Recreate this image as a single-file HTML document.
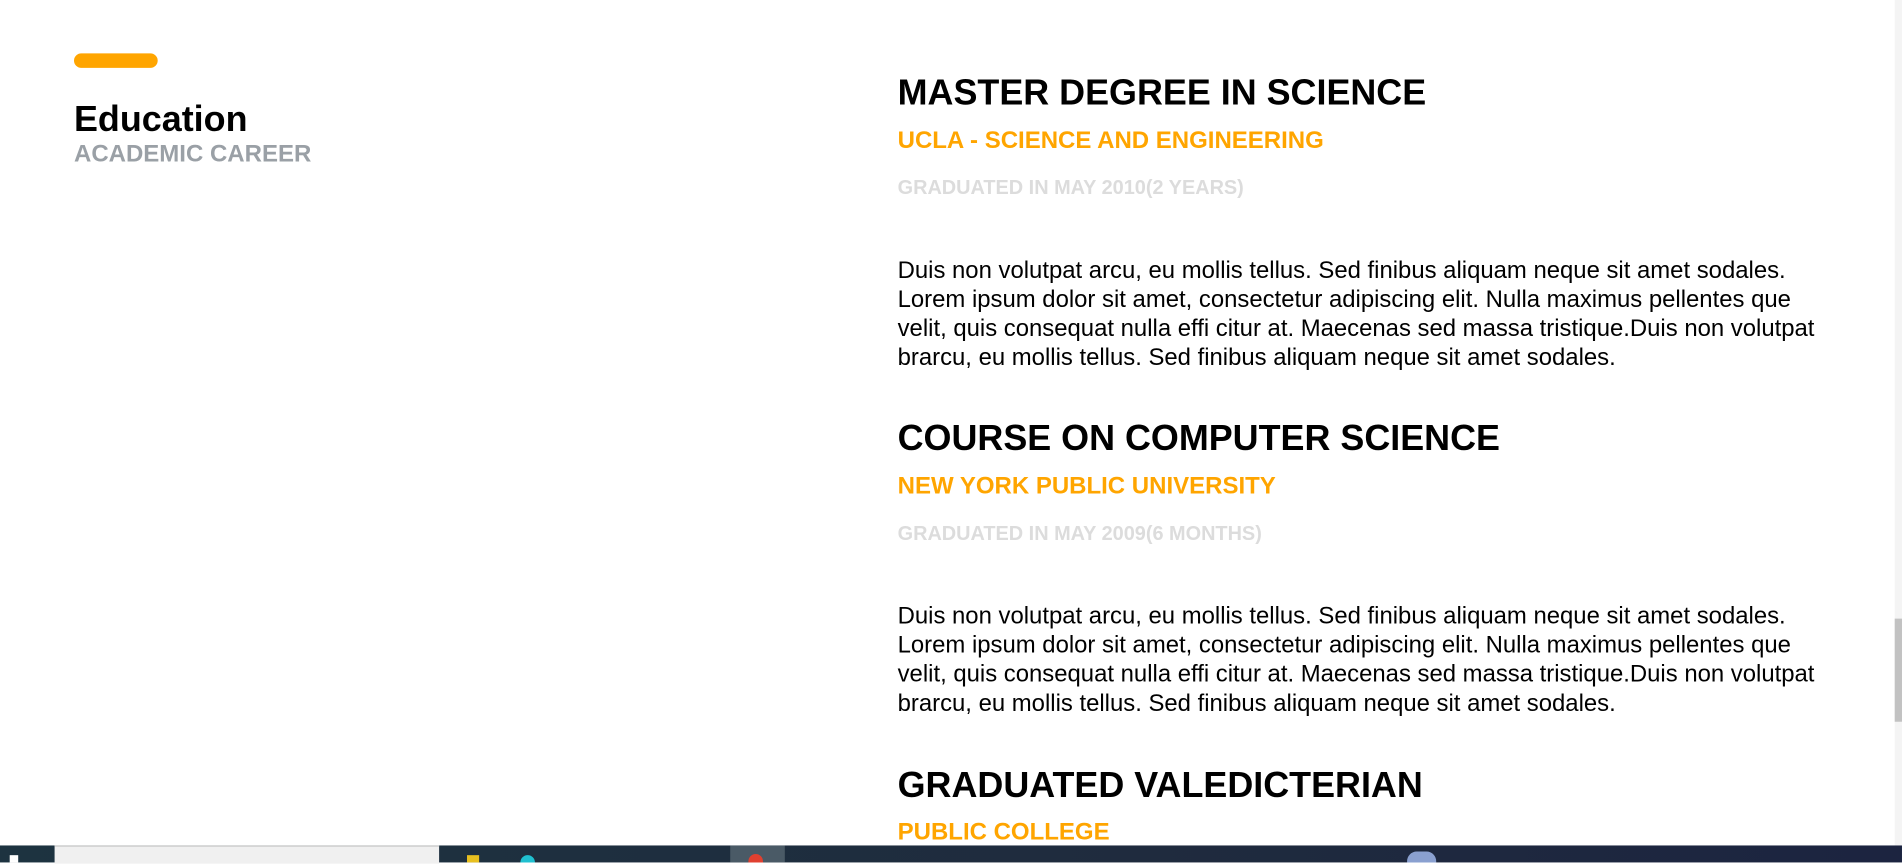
<!DOCTYPE html>
<html><head><meta charset="utf-8"><style>
html,body{margin:0;padding:0;width:1902px;height:862px;overflow:hidden;background:#fff;}
#w{position:absolute;left:0;top:0;width:1568px;height:711px;transform:scale(1.2130);transform-origin:0 0;font-family:"Liberation Sans",Arial,sans-serif;}
.a{position:absolute;white-space:nowrap;}
.h{font-weight:bold;font-size:29.6px;color:#000;left:740px;}
.s{font-weight:bold;font-size:19.8px;color:#ffa500;left:740px;}
.d{font-weight:bold;font-size:16.4px;color:#dcdcdc;left:740px;}
.p{font-size:19.7px;line-height:24px;color:#000;left:740px;}
</style></head><body><div id="w">
<div class="a" style="left:61px;top:44px;width:69px;height:12px;border-radius:6px;background:#ffa500"></div>
<div class="a" style="left:61px;top:82px;font-weight:bold;font-size:29.6px;color:#000">Education</div>
<div class="a" style="left:61px;top:116px;font-weight:bold;font-size:19.8px;color:#9aa0a6">ACADEMIC CAREER</div>

<div class="a h" style="top:60px">MASTER DEGREE IN SCIENCE</div>
<div class="a s" style="top:105px">UCLA - SCIENCE AND ENGINEERING</div>
<div class="a d" style="top:146px">GRADUATED IN MAY 2010(2 YEARS)</div>
<div class="a p" style="top:211px">Duis non volutpat arcu, eu mollis tellus. Sed finibus aliquam neque sit amet sodales.<br>Lorem ipsum dolor sit amet, consectetur adipiscing elit. Nulla maximus pellentes que<br>velit, quis consequat nulla effi citur at. Maecenas sed massa tristique.Duis non volutpat<br>brarcu, eu mollis tellus. Sed finibus aliquam neque sit amet sodales.</div>

<div class="a h" style="top:345px">COURSE ON COMPUTER SCIENCE</div>
<div class="a s" style="top:390px">NEW YORK PUBLIC UNIVERSITY</div>
<div class="a d" style="top:431px">GRADUATED IN MAY 2009(6 MONTHS)</div>
<div class="a p" style="top:496px">Duis non volutpat arcu, eu mollis tellus. Sed finibus aliquam neque sit amet sodales.<br>Lorem ipsum dolor sit amet, consectetur adipiscing elit. Nulla maximus pellentes que<br>velit, quis consequat nulla effi citur at. Maecenas sed massa tristique.Duis non volutpat<br>brarcu, eu mollis tellus. Sed finibus aliquam neque sit amet sodales.</div>

<div class="a h" style="top:631px">GRADUATED VALEDICTERIAN</div>
<div class="a s" style="top:675px">PUBLIC COLLEGE</div>

<div class="a" style="left:1562px;top:0;width:6px;height:697px;background:#f4f4f4"></div>
<div class="a" style="left:1562px;top:510px;width:6px;height:85px;background:#c2c2c2"></div>

<div class="a" style="left:0;top:697px;width:1568px;height:14px;background:linear-gradient(90deg,#1d3340,#1f2b3e 60%,#1c2440)"></div>
<div class="a" style="left:45px;top:697px;width:317px;height:14px;background:#f0f0f0;border-top:1px solid #c8c8c8"></div>
<div class="a" style="left:602px;top:697px;width:45px;height:14px;background:#4a5a66"></div>
<div class="a" style="left:8px;top:705px;width:7px;height:6px;background:#fff"></div>
<div class="a" style="left:385px;top:705px;width:10px;height:6px;background:#e8c020"></div>
<div class="a" style="left:429px;top:705px;width:12px;height:6px;border-radius:6px 6px 0 0;background:#20c0d0"></div>
<div class="a" style="left:617px;top:704px;width:12px;height:7px;border-radius:6px 6px 0 0;background:#e04030"></div>
<div class="a" style="left:1160px;top:702px;width:24px;height:9px;border-radius:8px 8px 0 0;background:#8aa0d0"></div>
</div></body></html>
